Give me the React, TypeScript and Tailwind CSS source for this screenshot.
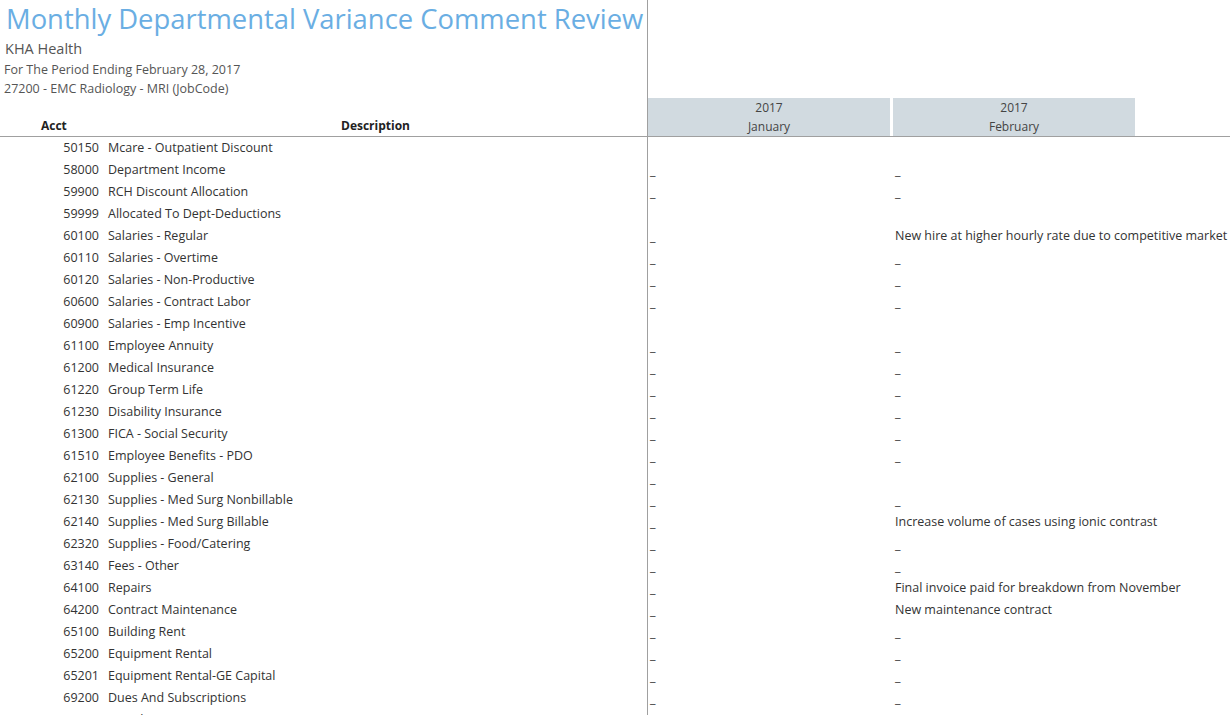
import React from 'react';

type Row = { acct: string; desc: string; jan?: string; feb?: string };

const D = '_';

const rows: Row[] = [
    { acct: '50150', desc: 'Mcare - Outpatient Discount' },
    { acct: '58000', desc: 'Department Income', jan: D, feb: D },
    { acct: '59900', desc: 'RCH Discount Allocation', jan: D, feb: D },
    { acct: '59999', desc: 'Allocated To Dept-Deductions' },
    { acct: '60100', desc: 'Salaries - Regular', jan: D, feb: 'New hire at higher hourly rate due to competitive market' },
    { acct: '60110', desc: 'Salaries - Overtime', jan: D, feb: D },
    { acct: '60120', desc: 'Salaries - Non-Productive', jan: D, feb: D },
    { acct: '60600', desc: 'Salaries - Contract Labor', jan: D, feb: D },
    { acct: '60900', desc: 'Salaries - Emp Incentive' },
    { acct: '61100', desc: 'Employee Annuity', jan: D, feb: D },
    { acct: '61200', desc: 'Medical Insurance', jan: D, feb: D },
    { acct: '61220', desc: 'Group Term Life', jan: D, feb: D },
    { acct: '61230', desc: 'Disability Insurance', jan: D, feb: D },
    { acct: '61300', desc: 'FICA - Social Security', jan: D, feb: D },
    { acct: '61510', desc: 'Employee Benefits - PDO', jan: D, feb: D },
    { acct: '62100', desc: 'Supplies - General', jan: D },
    { acct: '62130', desc: 'Supplies - Med Surg Nonbillable', jan: D, feb: D },
    { acct: '62140', desc: 'Supplies - Med Surg Billable', jan: D, feb: 'Increase volume of cases using ionic contrast' },
    { acct: '62320', desc: 'Supplies - Food/Catering', jan: D, feb: D },
    { acct: '63140', desc: 'Fees - Other', jan: D, feb: D },
    { acct: '64100', desc: 'Repairs', jan: D, feb: 'Final invoice paid for breakdown from November' },
    { acct: '64200', desc: 'Contract Maintenance', jan: D, feb: 'New maintenance contract' },
    { acct: '65100', desc: 'Building Rent', jan: D, feb: D },
    { acct: '65200', desc: 'Equipment Rental', jan: D, feb: D },
    { acct: '65201', desc: 'Equipment Rental-GE Capital', jan: D, feb: D },
    { acct: '69200', desc: 'Dues And Subscriptions', jan: D, feb: D },
    { acct: '69300', desc: 'Travel', jan: D, feb: D },
];

const Cell: React.FC<{ value?: string; w: string }> = ({ value, w }) => (
    <div className={`${w} shrink-0 whitespace-nowrap pl-[2px] ${value === D ? 'pt-[3px]' : ''}`}>{value}</div>
);

export default function App() {
    return (
        <div className="h-[715px] w-[1230px] overflow-hidden bg-white text-[12.5px] text-[#333]" style={{ fontFamily: '"Open Sans", sans-serif' }}>
            <div className="flex h-[137px] border-b border-[#a0a0a0]">
                <div className="flex w-[648px] shrink-0 flex-col border-r border-[#a0a0a0]">
                    <h1 className="pl-[6px] text-[27.4px] leading-[38px] text-[#6aaee3] whitespace-nowrap">Monthly Departmental Variance Comment Review</h1>
                    <div className="pl-[5px] text-[14.5px] leading-[22px] text-[#555]">KHA Health</div>
                    <div className="pl-[4px] text-[12.5px] leading-[20px] text-[#555]">For The Period Ending February 28, 2017</div>
                    <div className="pl-[4px] text-[12.5px] leading-[18px] text-[#555]">27200 - EMC Radiology - MRI (JobCode)</div>
                    <div className="mt-auto flex pb-[1px] text-[12px] font-bold text-[#222]">
                        <div className="w-[108px] pl-[41px]">Acct</div>
                        <div className="flex-1 pr-[4px] text-center">Description</div>
                    </div>
                </div>
                <div className="flex items-end gap-[3px] text-[12px] text-[#444]">
                    <div className="flex h-[38px] w-[242px] flex-col items-center justify-center bg-[#d1dae0] leading-[19px]">
                        <div>2017</div>
                        <div>January</div>
                    </div>
                    <div className="flex h-[38px] w-[242px] flex-col items-center justify-center bg-[#d1dae0] leading-[19px]">
                        <div>2017</div>
                        <div>February</div>
                    </div>
                </div>
            </div>
            <div className="flex">
                <div className="w-[648px] shrink-0 border-r border-[#a0a0a0]">
                    {rows.map((r) => (
                        <div key={r.acct} className="flex h-[22px] items-center whitespace-nowrap">
                            <div className="w-[99px] text-right">{r.acct}</div>
                            <div className="pl-[9px]">{r.desc}</div>
                        </div>
                    ))}
                </div>
                <div>
                    {rows.map((r) => (
                        <div key={r.acct} className="flex h-[22px] items-center">
                            <Cell value={r.jan} w="w-[245px]" />
                            <Cell value={r.feb} w="w-[337px]" />
                        </div>
                    ))}
                </div>
            </div>
        </div>
    );
}
